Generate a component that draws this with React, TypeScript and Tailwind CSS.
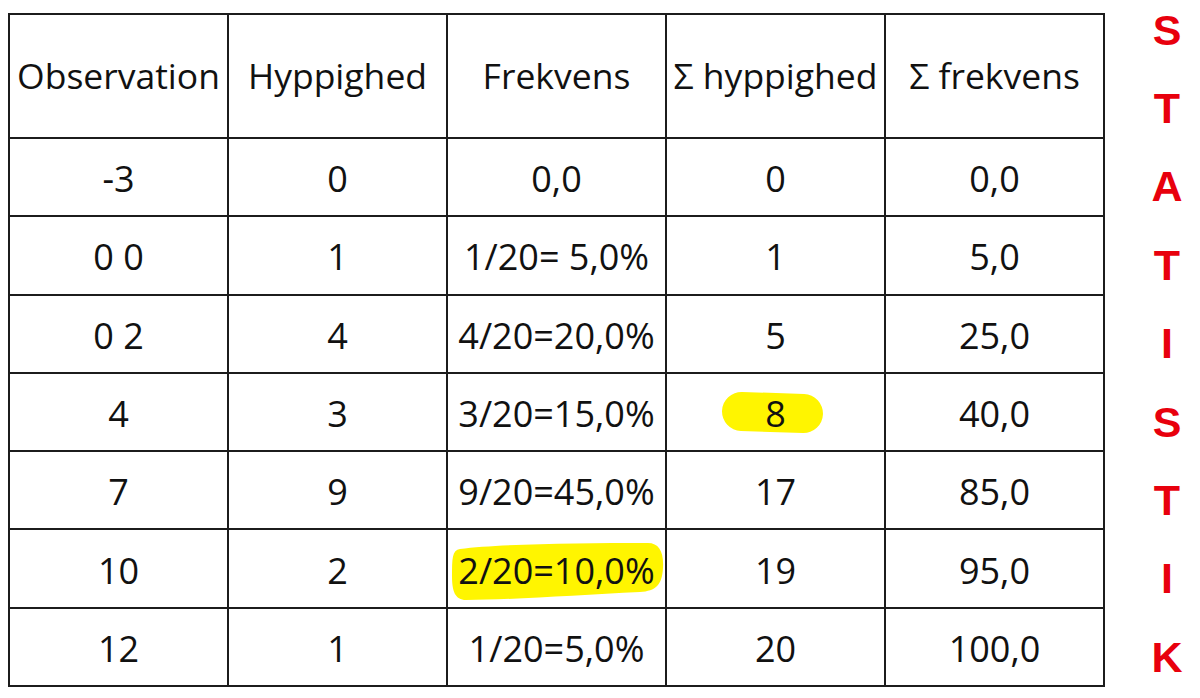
import React from 'react';

const headers = ['Observation', 'Hyppighed', 'Frekvens', 'Σ hyppighed', 'Σ frekvens'];

const rows: string[][] = [
  ['-3', '0', '0,0', '0', '0,0'],
  ['0 0', '1', '1/20= 5,0%', '1', '5,0'],
  ['0 2', '4', '4/20=20,0%', '5', '25,0'],
  ['4', '3', '3/20=15,0%', '8', '40,0'],
  ['7', '9', '9/20=45,0%', '17', '85,0'],
  ['10', '2', '2/20=10,0%', '19', '95,0'],
  ['12', '1', '1/20=5,0%', '20', '100,0'],
];

const letters = ['S', 'T', 'A', 'T', 'I', 'S', 'T', 'I', 'K'];

// marker strokes drawn behind two of the values
const PillMark = () => (
  <span className="absolute left-[55px] top-[19px] h-[39px] w-[101px] rotate-[2deg] rounded-full bg-[#fff500]" />
);

const BrushMark = () => (
  <svg className="absolute left-0 top-0 h-[76px] w-[217px]" viewBox="0 0 217 76">
    <path
      d="M12 19 C 50 14, 130 13, 200 13 C 211 13, 216 22, 215 38 C 214 55, 208 61, 192 62 C 130 65, 60 70, 18 70 C 7 70, 4 61, 4 46 C 4 29, 4 20, 12 19 Z"
      fill="#fff500"
    />
  </svg>
);

export default function App() {
  return (
    <div className="flex h-[698px] w-[1200px] items-start overflow-hidden bg-white">
      <div
        className="ml-[8px] mt-[13px] grid w-[1097px] grid-cols-[repeat(5,217px)] grid-rows-[122px_repeat(7,76.3px)] gap-[2px] border-2 border-[#1c1c1c] bg-[#1c1c1c] text-[#111]"
        style={{ fontFamily: '"Open Sans", sans-serif' }}
      >
        {headers.map((h) => (
          <div key={h} className="flex items-center justify-center bg-white text-[35.5px] whitespace-nowrap">
            {h}
          </div>
        ))}
        {rows.map((row, r) =>
          row.map((cell, c) => {
            const pill = r === 3 && c === 3;
            const brush = r === 5 && c === 2;
            return (
              <div
                key={`${r}-${c}`}
                className="relative flex items-center justify-center bg-white pt-[4px] text-[36px] whitespace-nowrap"
              >
                {pill && <PillMark />}
                {brush && <BrushMark />}
                <span className="relative">{cell}</span>
              </div>
            );
          })
        )}
      </div>

      <div
        className="-mt-[9px] ml-[40px] flex w-[44px] flex-col items-center text-[43px] font-bold text-[#e8000d]"
        style={{ fontFamily: '"Liberation Sans", Arial, sans-serif' }}
      >
        {letters.map((l, i) => (
          <div key={i} className="flex h-[78.4px] items-center leading-none">
            {l}
          </div>
        ))}
      </div>
    </div>
  );
}
